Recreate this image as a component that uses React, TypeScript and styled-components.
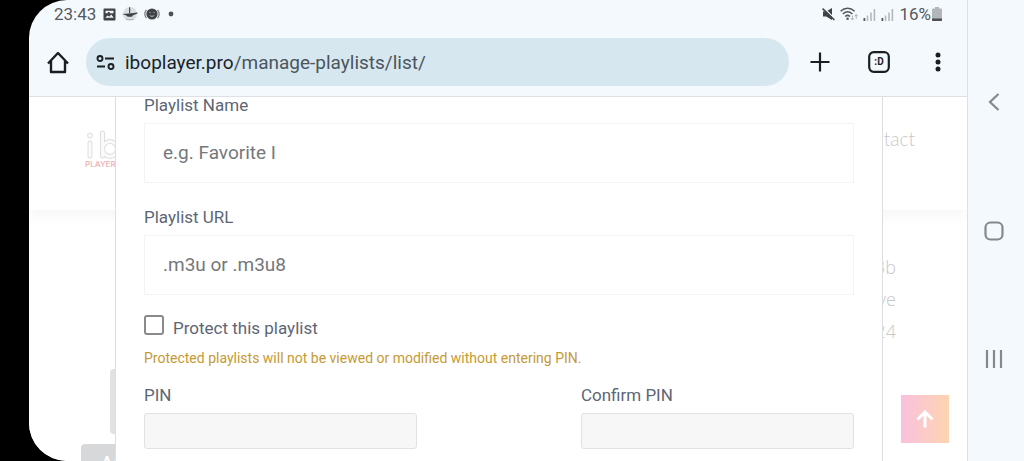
import React from "react";
import styled, { createGlobalStyle } from "styled-components";

const GlobalStyle = createGlobalStyle`
  *, *::before, *::after { box-sizing: border-box; }
  body { margin: 0; background: #000; font-family: Roboto, "Liberation Sans", sans-serif; }
  button { font: inherit; border: 0; padding: 0; background: none; cursor: pointer; }
  svg { display: block; flex: none; }
`;

const Device = styled.div`
  display: flex;
  height: 100vh;
  padding-left: 29px;
  background: #000;
`;

const Screen = styled.div`
  display: flex;
  flex: 1;
  min-width: 0;
  overflow: hidden;
  border-radius: 38px 0 0 38px;
  background: #f4f9fe;
`;

const Browser = styled.div`
  display: flex;
  flex-direction: column;
  flex: 1;
  min-width: 0;
`;

const StatusBar = styled.div`
  display: flex;
  align-items: center;
  justify-content: space-between;
  height: 28px;
  padding: 0 25px;
  color: #55595d;
  font-size: 17px;
  line-height: 20px;
`;

const StatusGroup = styled.div<{ $gap: number }>`
  display: flex;
  align-items: center;
  gap: ${(p) => p.$gap}px;
`;

const Toolbar = styled.header`
  display: flex;
  align-items: center;
  height: 69px;
  padding: 0 18px;
  border-bottom: 1px solid #dde1e6;
  color: #1a1f23;
`;

const ToolButton = styled.button`
  display: grid;
  place-items: center;
  width: 22px;
  height: 24px;
  color: inherit;
`;

const ToolGroup = styled.div`
  display: flex;
  gap: 37px;
  margin-left: 20px;
`;

const AddressBar = styled.div`
  display: flex;
  align-items: center;
  flex: 1;
  min-width: 0;
  gap: 9px;
  height: 48px;
  margin-left: 17px;
  padding: 0 10px;
  border-radius: 24px;
  background: #d7e7f0;
`;

const Address = styled.div`
  padding-top: 2px;
  color: #4a555d;
  font-size: 19px;
  line-height: 24px;
  white-space: nowrap;
`;

const Domain = styled.span`
  color: #1a2227;
`;

const Viewport = styled.main`
  display: grid;
  grid-template: minmax(0, 1fr) / minmax(0, 1fr);
  flex: 1;
  min-height: 0;
  position: relative;
  overflow: hidden;
  background: #fff;
`;

const Backdrop = styled.div`
  grid-area: 1 / 1;
  overflow: hidden;
  color: #c8c8c8;
`;

const SiteHeader = styled.div`
  display: flex;
  justify-content: space-between;
  align-items: flex-start;
  height: 113px;
  padding: 30px 52px 0 55px;
  box-shadow: 0 8px 12px #f8f8f8;
`;

const SiteLink = styled.a`
  color: inherit;
  font-family: Lato, "Open Sans", sans-serif;
  font-size: 19px;
  font-weight: 300;
  line-height: 24px;
  text-decoration: none;
`;

const SiteBody = styled.div`
  display: flex;
  justify-content: space-between;
  align-items: flex-start;
  padding: 41px 71px 0 52px;
`;

const Details = styled.div`
  font-family: "Open Sans", sans-serif;
  font-size: 18px;
  font-weight: 300;
  line-height: 32px;
  text-align: right;
`;

const SideTools = styled.div`
  display: flex;
  flex-direction: column;
  align-items: flex-start;
  gap: 10px;
  padding-top: 118px;
`;

const SidePanel = styled.div`
  width: 70px;
  height: 65px;
  margin-left: 29px;
  border-radius: 4px;
  background: #e1e1e1;
`;

const SideButton = styled.button`
  height: 36px;
  padding: 0 20px;
  border-radius: 4px;
  background: #d6d8da;
  color: #fff;
  font-size: 18px;
  font-weight: 500;
`;

const ScrollTop = styled.button`
  position: absolute;
  right: 18px;
  bottom: 18px;
  display: grid;
  place-items: center;
  width: 48px;
  height: 48px;
  background: linear-gradient(90deg, #f9c1de, #fed4b0);
  color: #fff;
`;

const Dialog = styled.form`
  grid-area: 1 / 1;
  position: relative;
  margin: 0 84px 0 86px;
  padding: 0 28px;
  border: solid #dcdee0;
  border-width: 0 1px;
  background: #fff;
  color: #5d6676;
`;

const Field = styled.div<{ $space?: number }>`
  display: flex;
  flex-direction: column;
  gap: 10px;
  min-width: 0;
  margin-bottom: ${(p) => p.$space ?? 0}px;
`;

const Label = styled.label`
  font-size: 17px;
  line-height: 16px;
`;

const TextInput = styled.input`
  width: 100%;
  height: 60px;
  padding: 0 18px 2px;
  border: 1px solid #f3f3f3;
  border-radius: 0;
  outline: 0;
  background: #fff;
  color: #5d6676;
  font: 19px Roboto, sans-serif;
  &::placeholder { color: #75787b; opacity: 1; }
`;

const PinInput = styled.input`
  width: 100%;
  height: 36px;
  padding: 0 12px;
  border: 1px solid #e2e2e2;
  border-radius: 3px;
  outline: 0;
  background: #f7f7f7;
  font: 17px Roboto, sans-serif;
`;

const CheckRow = styled.div`
  display: flex;
  align-items: flex-end;
  gap: 9px;
  height: 20px;
  margin-top: -6px;
`;

const Checkbox = styled.input`
  appearance: none;
  flex: none;
  width: 20px;
  height: 20px;
  margin: 0;
  border: 2px solid #8a8a8c;
  border-radius: 3px;
  background: #fff;
  &:checked { background: #5d6676; }
`;

const CheckLabel = styled.label`
  font-size: 17px;
  line-height: 14px;
`;

const Warning = styled.p`
  margin: 13px 0 19px;
  color: #c59a35;
  font-size: 14px;
  line-height: 20px;
`;

const PinRow = styled.div`
  display: grid;
  grid-template-columns: 5fr 3fr 5fr;
  & > :last-child { grid-column: 3; }
`;

const NavRail = styled.nav`
  display: flex;
  flex-direction: column;
  align-items: center;
  justify-content: space-between;
  width: 57px;
  padding: 90px 0;
  border-left: 1px solid #dde1e6;
  background: #f4f9fe;
  color: #85888c;
`;

const NavButton = styled.button`
  display: grid;
  place-items: center;
  width: 24px;
  height: 24px;
  margin-right: 4px;
  color: inherit;
`;

function Signal() {
  return (
    <svg width="13" height="13" viewBox="0 0 13 13">
      <path d="M0.5 10h1.8v3H0.5z" fill="#55595d" />
      <path d="M3.8 7.5h1.5V13H3.8zM7.2 4.5h1.6V13H7.2zM10.6 1h1.6v12h-1.6z" fill="#b4b8bc" />
    </svg>
  );
}

function StatusIcons() {
  return (
    <StatusGroup $gap={6}>
      <svg width="13" height="13" viewBox="0 0 13 13">
        <path
          fillRule="evenodd"
          fill="#3f4347"
          d="M1.5.5h10a1 1 0 0 1 1 1v10a1 1 0 0 1-1 1h-10a1 1 0 0 1-1-1v-10a1 1 0 0 1 1-1zM2.2 9.8h8.6L8.2 6.6 6.2 8.8 4.8 7.4zM2.5 2.8v2.4h2.2V4h2v1.2h3.8V2.8z"
        />
      </svg>
      <svg width="16" height="16" viewBox="0 0 16 16">
        <circle cx="8" cy="8" r="7" fill="#dadee1" />
        <path d="M7.6 1.2v6" stroke="#4c5054" strokeWidth="1.2" />
        <path d="M0 8 7 7.4l8.5-1v1L11 9.2 10 10.8H5.8L4 9.2z" fill="#3f4347" />
        <path d="M4 13.5h8" stroke="#b4b8bc" />
      </svg>
      <svg width="16" height="14" viewBox="0 0 16 14">
        <circle cx="8" cy="7" r="5.6" fill="#3f4347" />
        <path d="M2.4 2.8a7 7 0 0 0 0 8.4M13.6 2.8a7 7 0 0 1 0 8.4" fill="none" stroke="#7d8185" strokeWidth="1.3" />
        <path d="M5.4 8c1.1 2.6 4.1 2.6 5.2 0-1.5 1-3.7 1-5.2 0z" fill="#a9adb1" />
        <circle cx="6" cy="5.6" r="0.7" fill="#a9adb1" />
        <circle cx="10" cy="5.6" r="0.7" fill="#a9adb1" />
      </svg>
      <svg width="10" height="6" viewBox="0 0 10 6">
        <circle cx="5" cy="3" r="2.4" fill="#4c5054" />
      </svg>
    </StatusGroup>
  );
}

function SystemIcons() {
  return (
    <StatusGroup $gap={5}>
      <svg width="13" height="14" viewBox="0 0 13 14">
        <path d="M1 4.5h3.2L10 1v12L4.2 9.5H1z" fill="#3f4347" />
        <path d="M1.6.8 13 12" stroke="#f4f9fe" strokeWidth="1.4" />
        <path d="M.6 1.6 12.4 13" stroke="#3f4347" strokeWidth="1.6" />
      </svg>
      <svg width="18" height="14" viewBox="0 0 18 14">
        <g fill="none" stroke="#55595d" strokeWidth="1.5">
          <path d="M.6 4.3c4.2-4 9.8-4 14 0M2.8 7c3-2.8 6.6-2.8 9.6 0M5.2 9.5c1.5-1.4 3.3-1.4 4.8 0" />
        </g>
        <circle cx="7.6" cy="11.8" r="1.3" fill="#55595d" />
        <path d="M12.4 8.5V13l-1.4-1.7M12.4 13l1.3-1.7M16.2 12V7.5l-1.3 1.7M16.2 7.5l1.4 1.7" fill="none" stroke="#aeb2b6" />
      </svg>
      <Signal />
      <Signal />
      <StatusGroup $gap={1}>
        <span>16%</span>
        <svg width="10" height="14" viewBox="0 0 10 14">
          <path d="M3 0h4v1.5h2a1 1 0 0 1 1 1V14H0V2.5a1 1 0 0 1 1-1h2z" fill="#b3b6ba" />
          <path d="M0 11.5h10V13a1 1 0 0 1-1 1H1a1 1 0 0 1-1-1z" fill="#4c5054" />
        </svg>
      </StatusGroup>
    </StatusGroup>
  );
}

function Logo() {
  return (
    <svg width="76" height="42" viewBox="0 0 76 42" role="img" aria-label="ibo player">
      <g fill="none" strokeLinecap="round">
        <g stroke="#dedede" strokeWidth="5">
          <path d="M6 16v13M18.500 6v23" />
          <circle cx="26" cy="22" r="7.500" />
          <circle cx="48" cy="22" r="7.500" />
        </g>
        <g stroke="#fafafa" strokeWidth="3">
          <path d="M6 16v13M18.500 6v23" />
          <circle cx="26" cy="22" r="7.500" />
          <circle cx="48" cy="22" r="7.500" />
        </g>
      </g>
      <circle cx="6" cy="8.500" r="2.500" fill="#fafafa" stroke="#dedede" />
      <text x="1" y="40" fontFamily="Inter, sans-serif" fontSize="8" fontWeight="600" fill="#ecb8b8">PLAYER</text>
    </svg>
  );
}

export default function App() {
  return (
    <Device>
      <GlobalStyle />
      <Screen>
        <Browser>
          <StatusBar>
            <StatusGroup $gap={7}>
              <span>23:43</span>
              <StatusIcons />
            </StatusGroup>
            <SystemIcons />
          </StatusBar>

          <Toolbar>
            <ToolButton aria-label="Home">
              <svg width="22" height="24" viewBox="0 0 22 24" fill="none" stroke="currentColor" strokeWidth="2.4" strokeLinejoin="round">
                <path d="M4 11V22h14V11M1 13.500 11 3l10 10.500" />
              </svg>
            </ToolButton>
            <AddressBar>
              <svg width="20" height="16" viewBox="0 0 20 16" fill="none" stroke="currentColor" strokeWidth="1.9">
                <circle cx="4" cy="4.500" r="2.500" />
                <path d="M9 4.500h9M1 12.500h8" />
                <circle cx="15" cy="12.500" r="2.500" />
              </svg>
              <Address>
                <Domain>iboplayer.pro</Domain>/manage-playlists/list/
              </Address>
            </AddressBar>
            <ToolGroup>
              <ToolButton aria-label="New tab">
                <svg width="20" height="20" viewBox="0 0 20 20" stroke="currentColor" strokeWidth="2.2">
                  <path d="M10 .5v19M.5 10h19" />
                </svg>
              </ToolButton>
              <ToolButton aria-label="Tabs">
                <svg width="22" height="22" viewBox="0 0 22 22">
                  <rect x="1.2" y="1.2" width="19.6" height="19.6" rx="4.5" fill="none" stroke="currentColor" strokeWidth="2.2" />
                  <text x="11" y="14" textAnchor="middle" fontFamily="Roboto, sans-serif" fontSize="10" fontWeight="700" fill="currentColor">:D</text>
                </svg>
              </ToolButton>
              <ToolButton aria-label="Menu">
                <svg width="6" height="20" viewBox="0 0 6 20" fill="currentColor">
                  <circle cx="3" cy="3" r="2.5" />
                  <circle cx="3" cy="10" r="2.5" />
                  <circle cx="3" cy="17" r="2.5" />
                </svg>
              </ToolButton>
            </ToolGroup>
          </Toolbar>

          <Viewport>
            <Backdrop>
              <SiteHeader>
                <Logo />
                <SiteLink href="#contact">Contact</SiteLink>
              </SiteHeader>
              <SiteBody>
                <SideTools>
                  <SidePanel />
                  <SideButton type="button">Add</SideButton>
                </SideTools>
                <Details>
                  <div>3b</div>
                  <div>Active</div>
                  <div>2024</div>
                </Details>
              </SiteBody>
            </Backdrop>
            <ScrollTop type="button" aria-label="Back to top">
              <svg width="18" height="18" viewBox="0 0 18 18" fill="none" stroke="currentColor" strokeWidth="3">
                <path d="M9 17.5V2.5M1.5 9.5 9 2l7.5 7.5" />
              </svg>
            </ScrollTop>
            <Dialog onSubmit={(e: React.FormEvent) => e.preventDefault()}>
              <Field $space={26}>
                <Label htmlFor="name">Playlist Name</Label>
                <TextInput id="name" placeholder="e.g. Favorite I" />
              </Field>
              <Field $space={26}>
                <Label htmlFor="url">Playlist URL</Label>
                <TextInput id="url" placeholder=".m3u or .m3u8" />
              </Field>
              <CheckRow>
                <Checkbox id="protect" type="checkbox" />
                <CheckLabel htmlFor="protect">Protect this playlist</CheckLabel>
              </CheckRow>
              <Warning>Protected playlists will not be viewed or modified without entering PIN.</Warning>
              <PinRow>
                <Field>
                  <Label htmlFor="pin">PIN</Label>
                  <PinInput id="pin" type="password" disabled />
                </Field>
                <Field>
                  <Label htmlFor="confirm">Confirm PIN</Label>
                  <PinInput id="confirm" type="password" disabled />
                </Field>
              </PinRow>
            </Dialog>
          </Viewport>
        </Browser>

        <NavRail aria-label="System navigation">
          <NavButton aria-label="Back">
            <svg width="12" height="18" viewBox="0 0 12 18" fill="none" stroke="currentColor" strokeWidth="2.2">
              <path d="M10.5 1 2 9l8.5 8" />
            </svg>
          </NavButton>
          <NavButton aria-label="Home screen">
            <svg width="20" height="20" viewBox="0 0 20 20" fill="none" stroke="currentColor" strokeWidth="2.2">
              <rect x="1.5" y="1.5" width="17" height="17" rx="5" />
            </svg>
          </NavButton>
          <NavButton aria-label="Recent apps">
            <svg width="18" height="18" viewBox="0 0 18 18" stroke="currentColor" strokeWidth="2.2">
              <path d="M2 0v18M9 0v18M16 0v18" />
            </svg>
          </NavButton>
        </NavRail>
      </Screen>
    </Device>
  );
}
